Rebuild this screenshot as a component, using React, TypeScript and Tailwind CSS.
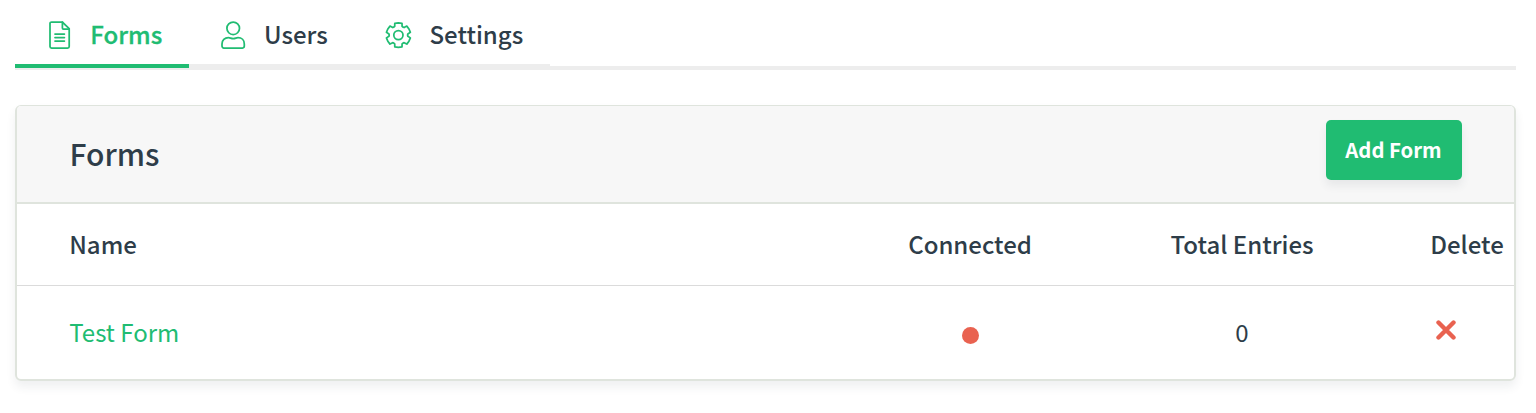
import type { ReactNode } from "react";

function DocumentIcon() {
  return (
    <svg width="22" height="28" viewBox="0 0 22 28" fill="none" stroke="#20bc72" strokeWidth="1.75" strokeLinejoin="round" strokeLinecap="round">
      <path d="M2.600 1h10.600L20.200 7.600v17.800a1.600 1.600 0 0 1-1.600 1.600h-16A1.600 1.600 0 0 1 1 25.400V2.600A1.600 1.600 0 0 1 2.600 1Z" />
      <path d="M13.400 1v6a1 1 0 0 0 1 1h5.600" />
      <path d="M6 13.100h9.400M6 16.600h9.400M6 20.100h9.400" />
    </svg>
  );
}

function UserIcon() {
  return (
    <svg width="25" height="28" viewBox="0 0 25 28" fill="none" stroke="#20bc72" strokeWidth="1.75" strokeLinejoin="round">
      <circle cx="12.200" cy="7.300" r="6.300" />
      <path d="M7.400 16.700c1.800 0 2.600.9 4.800.9s3-.9 4.800-.9c3.700 0 6.300 2.700 6.300 6.200v2.200c0 1-.8 1.900-1.800 1.900H2.800c-1 0-1.800-.9-1.800-1.900v-2.200c0-3.500 2.700-6.200 6.400-6.200Z" />
    </svg>
  );
}

const toothAngles = [0, 60, 120, 180, 240, 300];
const toothProfile = [
  [-30, 9.200],
  [-23, 9.500],
  [-17, 12.300],
  [0, 12.200],
  [17, 12.300],
  [23, 9.500],
];
const gearPoints = toothAngles
  .flatMap((base) =>
    toothProfile.map(([offset, radius]) => {
      const angle = ((base + offset - 90) * Math.PI) / 180;
      return `${(13.400 + radius * Math.cos(angle)).toFixed(2)},${(13.100 + radius * Math.sin(angle)).toFixed(2)}`;
    }),
  )
  .join(" ");

function GearIcon() {
  return (
    <svg width="27" height="27" viewBox="0 0 27 27" fill="none" stroke="#20bc72" strokeWidth="1.75" strokeLinejoin="round">
      <polygon points={gearPoints} />
      <circle cx="13.400" cy="13.100" r="4.600" />
    </svg>
  );
}

function Tab({ icon, label, active, className }: { icon: ReactNode; label: string; active?: boolean; className: string }) {
  return (
    <a
      href="#"
      className={`flex h-[68px] items-center border-b-4 pt-[6px] text-[24px] font-medium ${active ? "border-[#20bc72] text-[#20bc72] [-webkit-text-stroke:0.3px_#20bc72]" : "border-[#ededed]"} ${className}`}
    >
      {icon}
      <span className="pb-[2px]">{label}</span>
    </a>
  );
}

const columns = "grid grid-cols-[1fr_272px_272px_136px] items-center";

export default function App() {
  return (
    <div className="h-[413px] overflow-hidden bg-white pr-5 pl-[15px] font-['Noto_Sans_CJK_SC','Source_Sans_Pro',sans-serif] text-[#2e3d49]">
      <nav className="flex h-[70px] border-b-4 border-[#ededed]">
        <Tab active icon={<DocumentIcon />} label="Forms" className="w-[174px] gap-[19.800px] pl-[33.500px]" />
        <Tab icon={<UserIcon />} label="Users" className="w-[165px] gap-[18px] pl-[32px]" />
        <Tab icon={<GearIcon />} label="Settings" className="w-[196px] gap-[17.500px] pl-[31px]" />
      </nav>

      <section className="mt-[35px] h-[276px] rounded-md border-2 border-t border-[#dfe4dd] shadow-[0_6px_10px_rgba(46,61,73,0.08)]">
        <header className="flex h-[98px] items-center justify-between rounded-t border-b-2 border-[#dfe4dd] bg-[#f7f7f7] pr-[52px] pl-[52.500px]">
          <h1 className="pb-[2px] text-[30px] leading-none font-medium">Forms</h1>
          <button className="mb-[8px] h-[60px] w-[136px] rounded-[5px] bg-[#20bc72] pr-px pb-[2px] text-[20.300px] font-bold text-white shadow-[0_6px_8px_rgba(46,61,73,0.08)]">
            Add Form
          </button>
        </header>
        <div className={`${columns} h-[82px] border-b border-[#dbdbdb] pb-[2px] text-[24px] font-medium`}>
          <div className="pl-[52.250px]">Name</div>
          <div className="text-center">Connected</div>
          <div className="text-center">Total Entries</div>
          <div className="pl-[52.250px]">Delete</div>
        </div>
        <div className={`${columns} h-[93px] pb-[2px] text-[24px]`}>
          <a href="#" className="pl-[52.250px] text-[#20bc72]">Test Form</a>
          <div className="flex justify-center pt-[8px]">
            <span className="size-[17px] rounded-full bg-[#e96250]" />
          </div>
          <div className="text-center">0</div>
          <button aria-label="Delete Test Form" className="flex justify-center pb-[4px]">
            <svg width="20" height="20" viewBox="0 0 20 20" stroke="#e96250" strokeWidth="4.400" strokeLinecap="round">
              <path d="M2.500 2.500 17.500 17.500M17.500 2.500 2.500 17.500" />
            </svg>
          </button>
        </div>
      </section>
    </div>
  );
}
